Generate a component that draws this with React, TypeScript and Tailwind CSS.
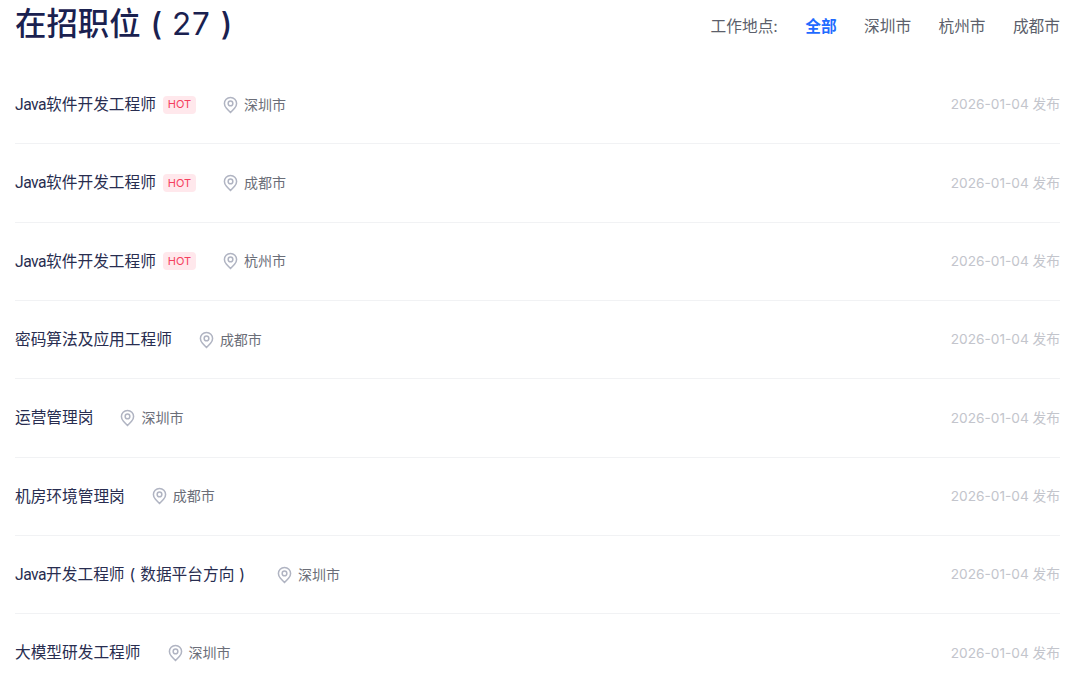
const jobs = [
  { java: true, title: "软件开发工程师", hot: true, city: "深圳市" },
  { java: true, title: "软件开发工程师", hot: true, city: "成都市" },
  { java: true, title: "软件开发工程师", hot: true, city: "杭州市" },
  { title: "密码算法及应用工程师", city: "成都市" },
  { title: "运营管理岗", city: "深圳市" },
  { title: "机房环境管理岗", city: "成都市" },
  { java: true, title: "开发工程师", sub: "数据平台方向", city: "深圳市" },
  { title: "大模型研发工程师", city: "深圳市" },
];

// full-width bracket with the glyph centred in its 1em cell
function Paren({ children }: { children: string }) {
  return <span className="inline-block w-[1em] text-center">{children}</span>;
}

function PinIcon() {
  return (
    <svg width="15" height="18" viewBox="0 0 16 18" fill="none" stroke="#b0b4c2" strokeWidth="1.6">
      <path d="M8 1C4.300 1 1.500 3.900 1.500 7.400c0 2 .9 3.600 2.200 5.100C5 14 6.500 15.500 8 17c1.500-1.500 3-3 4.300-4.500 1.300-1.500 2.200-3.100 2.200-5.100C14.500 3.900 11.700 1 8 1z" />
      <circle cx="8" cy="7.300" r="2.500" />
    </svg>
  );
}

export default function App() {
  return (
    <div
      className="h-[680px] w-[1080px] overflow-hidden bg-white pl-[15px] pr-5"
      style={{ fontFamily: 'Inter, "Noto Sans CJK SC", sans-serif' }}
    >
      <div className="flex h-[66px] items-start justify-between">
        <h1 className="text-[31.4px] leading-[48px] font-medium text-[#1a2150]">
          在招职位<Paren>(</Paren>
          <span className="font-normal tracking-[1px]">27</span>
          <Paren>)</Paren>
        </h1>
        <div className="mt-[15px] flex items-center gap-[27.4px] text-[15.7px] leading-6 text-[#5c5f6b]">
          <span>工作地点:</span>
          <span className="font-semibold text-[#1f6bff]">全部</span>
          <span>深圳市</span>
          <span>杭州市</span>
          <span>成都市</span>
        </div>
      </div>
      {jobs.map((job, i) => (
        <div
          key={i}
          className="flex h-[78.33px] items-center justify-between border-b border-[#f1f2f4]"
        >
          <div className="flex items-center">
            <span className="text-[15.7px] text-[#282d50]">
              {job.java && <span className="font-['Roboto'] tracking-[-0.5px]">Java</span>}
              {job.title}
              {job.sub && (
                <>
                  <Paren>(</Paren>
                  {job.sub}
                  <Paren>)</Paren>
                </>
              )}
            </span>
            {job.hot && (
              <span className="ml-[7px] flex h-[18px] w-[33px] items-center justify-center rounded-sm bg-[#ffe8ec] text-[11px] text-[#f5405e]">
                HOT
              </span>
            )}
            <span className="ml-[27px] flex items-center gap-[6px] text-sm text-[#6b6e78]">
              <PinIcon />
              {job.city}
            </span>
          </div>
          <span className="text-[13.7px] text-[#c3c5cc]">2026-01-04 发布</span>
        </div>
      ))}
    </div>
  );
}
